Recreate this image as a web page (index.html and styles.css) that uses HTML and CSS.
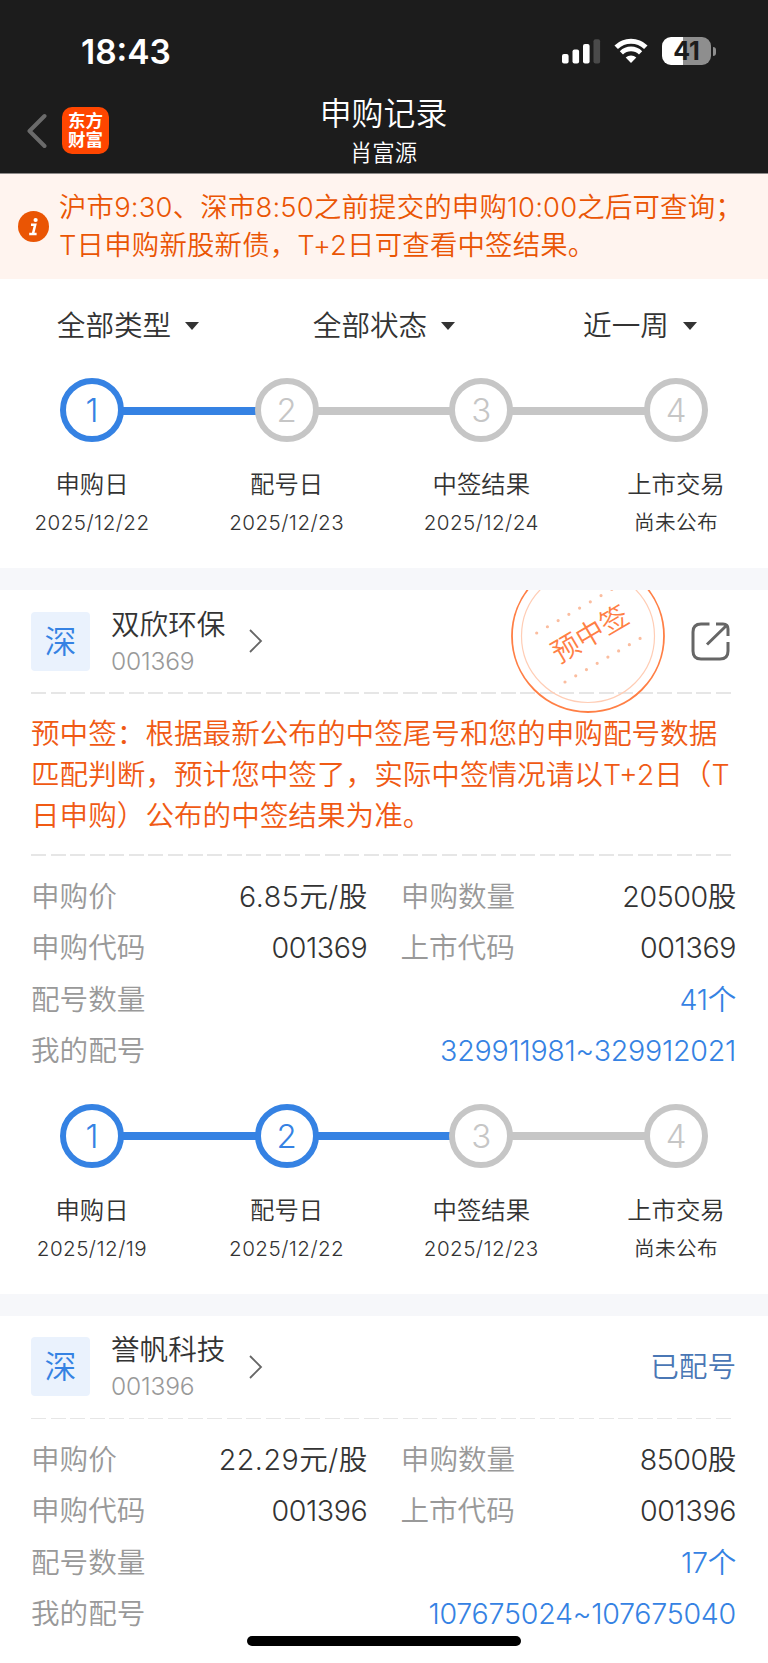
FILE: index.html
```html
<!DOCTYPE html>
<html lang="zh-CN">

    <head>
        <meta charset="UTF-8">
        <title>申购记录</title>
        <link rel="stylesheet" href="styles.css">
    </head>

    <body>
        <div class="page">
            <!-- 顶部 -->
            <div class="header">
                <div class="status">
                    <span class="time">18:43</span>
                    <svg class="signal" width="39" height="25" viewBox="0 0 39 25" fill="#fff">
                        <rect x="0" y="15" width="6.6" height="9.5" rx="2"/>
                        <rect x="10.5" y="10.5" width="6.6" height="14" rx="2"/>
                        <rect x="21" y="5" width="6.6" height="19.5" rx="2"/>
                        <rect x="31.5" y="0.3" width="6.6" height="24.2" rx="2" fill="#4a4a4a"/>
                    </svg>
                    <svg class="wifi" width="34" height="26" viewBox="0 0 34 26" fill="none" stroke="#fff">
                        <path d="M2.2 9.2C10.5 1.3 23.5 1.3 31.8 9.2" stroke-width="5"/>
                        <path d="M7.4 14.8C12.8 9.6 21.2 9.6 26.6 14.8" stroke-width="4.6"/>
                        <path d="M17 25L11.7 19.6C14.7 16.8 19.3 16.8 22.3 19.6Z" fill="#fff" stroke="none"/>
                    </svg>
                    <div class="battery"><span>41</span></div>
                    <i class="nub"></i>
                </div>
                <div class="nav">
                    <svg class="back" width="20" height="36" viewBox="0 0 20 36" fill="none" stroke="#6b6b6b" stroke-width="4" stroke-linecap="round" stroke-linejoin="round">
                        <path d="M17.5 3L2.5 18L17.5 33"/>
                    </svg>
                    <div class="logo">东方<br>财富</div>
                    <div class="title">
                        <h1>申购记录</h1>
                        <p>肖富源</p>
                    </div>
                </div>
            </div>

            <!-- 提示 -->
            <div class="notice">
                <svg width="31" height="31" viewBox="0 0 31 31">
                    <circle cx="15.5" cy="15.5" r="15.5" fill="#ea5504"/>
                    <circle cx="17.6" cy="9" r="2.1" fill="#fff"/>
                    <path d="M13 13.8H17.2L15 22.6M11.2 22.9H18.6" fill="none" stroke="#fff" stroke-width="2.5"/>
                </svg>
                <p>沪市9:30、深市8:50之前提交的申购10:00之后可查询；<br>T日申购新股新债，T+2日可查看中签结果。</p>
            </div>

            <!-- 筛选 -->
            <div class="filter">
                <span>全部类型<i></i></span>
                <span>全部状态<i></i></span>
                <span>近一周<i></i></span>
            </div>
            <div class="steps">
                <div class="line">
                    <b class="on">1</b><i class="on"></i><b>2</b><i></i><b>3</b><i></i><b>4</b>
                </div>
                <ul>
                    <li>申购日<span>2025/12/22</span></li>
                    <li>配号日<span>2025/12/23</span></li>
                    <li>中签结果<span>2025/12/24</span></li>
                    <li>上市交易<span>尚未公布</span></li>
                </ul>
            </div>

            <!-- 双欣环保 -->
            <div class="card">
                <div class="stock">
                    <div class="market">深</div>
                    <div class="name">
                        <h2>双欣环保</h2>
                        <p>001369</p>
                    </div>
                    <svg class="more" width="14" height="24" viewBox="0 0 14 24" fill="none" stroke="#666" stroke-width="1.8">
                        <path d="M1 1L12 12L1 23"/>
                    </svg>
                    <svg class="share" width="39" height="39" viewBox="0 0 39 39" fill="none" stroke="#666" stroke-width="3">
                        <path d="M18.5 2H10Q2 2 2 10V29Q2 37 10 37H29Q37 37 37 29V20"/>
                        <path d="M25 2H32Q37 2 37 7V14M36 3L16 22.5"/>
                    </svg>
                </div>
                <svg class="stamp" width="156" height="124" viewBox="0 0 156 124">
                    <circle cx="78" cy="46" r="76" fill="none" stroke="#ff7f45" stroke-width="1.8"/>
                    <circle cx="78" cy="46" r="66.5" fill="none" stroke="#ffcdb5" stroke-width="1.2"/>
                    <path class="dots" d="M26.7 43L110 -5.4"/>
                    <path class="dots" d="M55 92L136 45"/>
                    <text x="80" y="54" text-anchor="middle" transform="rotate(-30.5 80 44)">预中签</text>
                </svg>
                <div class="dash"></div>
                <p class="tip">预中签：根据最新公布的中签尾号和您的申购配号数据<br>匹配判断，预计您中签了，实际中签情况请以T+2日（T<br>日申购）公布的中签结果为准。</p>
                <div class="dash"></div>
                <div class="info">
                    <div class="row">
                        <label>申购价</label><em class="price">6.85元/股</em>
                        <label>申购数量</label><em>20500股</em>
                    </div>
                    <div class="row">
                        <label>申购代码</label><em>001369</em>
                        <label>上市代码</label><em>001369</em>
                    </div>
                    <div class="row">
                        <label>配号数量</label><a>41个</a>
                    </div>
                    <div class="row">
                        <label>我的配号</label><a>329911981~329912021</a>
                    </div>
                </div>
                <div class="steps">
                    <div class="line">
                        <b class="on">1</b><i class="on"></i><b class="on">2</b><i class="on"></i><b>3</b><i></i><b>4</b>
                    </div>
                    <ul>
                        <li>申购日<span>2025/12/19</span></li>
                        <li>配号日<span>2025/12/22</span></li>
                        <li>中签结果<span>2025/12/23</span></li>
                        <li>上市交易<span>尚未公布</span></li>
                    </ul>
                </div>
            </div>

            <!-- 誉帆科技 -->
            <div class="card">
                <div class="stock">
                    <div class="market">深</div>
                    <div class="name">
                        <h2>誉帆科技</h2>
                        <p>001396</p>
                    </div>
                    <svg class="more" width="14" height="24" viewBox="0 0 14 24" fill="none" stroke="#666" stroke-width="1.8">
                        <path d="M1 1L12 12L1 23"/>
                    </svg>
                    <span class="state">已配号</span>
                </div>
                <div class="dash thin"></div>
                <div class="info">
                    <div class="row">
                        <label>申购价</label><em class="price">22.29元/股</em>
                        <label>申购数量</label><em>8500股</em>
                    </div>
                    <div class="row">
                        <label>申购代码</label><em>001396</em>
                        <label>上市代码</label><em>001396</em>
                    </div>
                    <div class="row">
                        <label>配号数量</label><a>17个</a>
                    </div>
                    <div class="row">
                        <label>我的配号</label><a>107675024~107675040</a>
                    </div>
                </div>
            </div>
            <div class="home"></div>
        </div>
    </body>

</html>
```
FILE: styles.css
```css
* {
    margin: 0;
    padding: 0;
    list-style: none;
    box-sizing: border-box;
}

body {
    background: #fff;
    color: #333;
    font-family: Inter, "Noto Sans CJK SC", sans-serif;
    font-size: 28.6px;
    font-weight: 350;
}

i, em {
    font-style: normal;
}

.page {
    width: 768px;
    height: 1663px;
    overflow: hidden;
    position: relative;
}

/* 顶部 */
.header {
    height: 174px;
    background: #1c1c1c;
    border-bottom: 1px solid #8d8a89;
    color: #fff;
}

.status {
    display: flex;
    height: 92px;
    padding: 37px 52px 0 81px;
}

.time {
    flex: 1;
    font-size: 33.5px;
    font-weight: 600;
    line-height: 30px;
}

.signal {
    margin: 2px 14px 0 0;
}

.wifi {
    margin: 1px 14px 0 -1px;
}

.battery {
    width: 49px;
    height: 28px;
    border-radius: 9px;
    background: linear-gradient(90deg, #fff 21px, #8e8e8e 21px);
    color: #1c1c1c;
    font-size: 25px;
    font-weight: 700;
    line-height: 28px;
    text-align: center;
}

.nub {
    width: 3px;
    height: 9px;
    margin: 10px 0 0 2px;
    border-radius: 0 4px 4px 0;
    background: #8e8e8e;
}

.nav {
    display: grid;
    grid-template-columns: 20px 47px 1fr 110px;
    column-gap: 15px;
    padding: 0 0 0 27px;
}

.back {
    margin-top: 21px;
}

.logo {
    height: 47px;
    margin-top: 15px;
    padding-top: 4px;
    border-radius: 10px;
    background: #ff4600;
    font-size: 17.5px;
    font-weight: 700;
    line-height: 19px;
    text-align: center;
}

.title {
    text-align: center;
}

.title h1 {
    font-size: 31.9px;
    font-weight: 350;
    line-height: 44px;
}

.title p {
    font-size: 22.4px;
    line-height: 34px;
}

/* 提示 */
.notice {
    display: flex;
    align-items: center;
    height: 105px;
    padding-left: 18px;
    background: #fff4ef;
    color: #ea5504;
}

.notice p {
    margin-left: 10px;
    font-size: 27.4px;
    line-height: 37.7px;
    letter-spacing: .2px;
    white-space: nowrap;
}

/* 筛选 */
.filter {
    display: grid;
    grid-template-columns: repeat(3, 1fr);
    height: 99px;
    line-height: 93px;
    text-align: center;
}

.filter i {
    display: inline-block;
    margin-left: 14px;
    border: 7px solid transparent;
    border-top: 8px solid #333;
    border-bottom: 0;
    vertical-align: 6px;
}

/* 进度 */
.line {
    display: flex;
    align-items: center;
    padding: 0 60px;
}

.line b {
    width: 64px;
    height: 64px;
    border: 6.5px solid #c6c6c6;
    border-radius: 50%;
    color: #c6c6c6;
    font-size: 33px;
    font-weight: 300;
    line-height: 52px;
    text-align: center;
}

.line i {
    flex: 1;
    height: 8px;
    margin: 1px -1px 0;
    background: #c6c6c6;
}

.line b.on {
    border-color: #3582e3;
    color: #3582e3;
}

.line i.on {
    background: #3582e3;
}

.steps ul {
    display: flex;
    justify-content: space-between;
    height: 126px;
    padding: 23px 32px 0;
}

.steps li {
    width: 120px;
    font-size: 24.4px;
    line-height: 39px;
    text-align: center;
}

.steps span {
    display: block;
    font-size: 20.6px;
    letter-spacing: .45px;
    line-height: 37px;
}

/* 新股卡片 */
.card {
    position: relative;
    border-top: 22px solid #f6f7fa;
    padding: 21px 32px 0 31px;
    overflow: hidden;
}

.card .steps {
    margin: 27px -32px 0 -31px;
}

.stock {
    display: flex;
    align-items: center;
    height: 60px;
}

.market {
    width: 59px;
    height: 59px;
    border-radius: 4px;
    background: #eaf2fd;
    color: #3582e3;
    font-size: 32px;
    line-height: 59px;
    text-align: center;
}

.name {
    width: 138px;
    margin: 3px 0 0 21px;
}

.name h2 {
    font-size: 28.6px;
    font-weight: 350;
    line-height: 37px;
}

.name p {
    color: #999;
    font-size: 24.6px;
    letter-spacing: -.2px;
    line-height: 37px;
}

.share {
    margin: 0 6px 0 auto;
}

.state {
    margin: -4px 0 0 auto;
    color: #4a77b5;
}

.stamp {
    position: absolute;
    left: 510px;
    top: 0;
}

.stamp text {
    fill: #ff7f45;
    font-size: 28px;
}

.dots {
    fill: none;
    stroke: #fbbd9f;
    stroke-width: 3.2;
    stroke-linecap: round;
    stroke-dasharray: 0 12.4;
}

.dash {
    height: 2px;
    margin: 21px 0 20px;
    background: repeating-linear-gradient(90deg, #e6e6e6 0 15px, transparent 15px 19.57px);
}

.dash.thin {
    height: 1px;
}

.tip {
    color: #f05a14;
    line-height: 40.9px;
    white-space: nowrap;
}

.tip + .dash {
    margin-top: 17px;
}

.row {
    display: flex;
    height: 51.5px;
    line-height: 51.5px;
}

.info {
    margin-top: -5px;
}

.row label {
    color: #999;
}

.row em {
    flex: 1;
    text-align: right;
    letter-spacing: -.4px;
}

.row em.price {
    letter-spacing: .5px;
}

/* 左右两组各占一半 */
.row em + label {
    margin-left: 33px;
}

.row em:nth-child(2) {
    flex: none;
    width: 222px;
}

.row .price:nth-child(2) {
    width: 251px;
}

.row a {
    margin-left: auto;
    color: #3582e3;
    letter-spacing: -.25px;
}

/* 底部横条 */
.home {
    position: absolute;
    left: 247px;
    bottom: 17px;
    width: 274px;
    height: 10px;
    border-radius: 5px;
    background: #000;
}
```
